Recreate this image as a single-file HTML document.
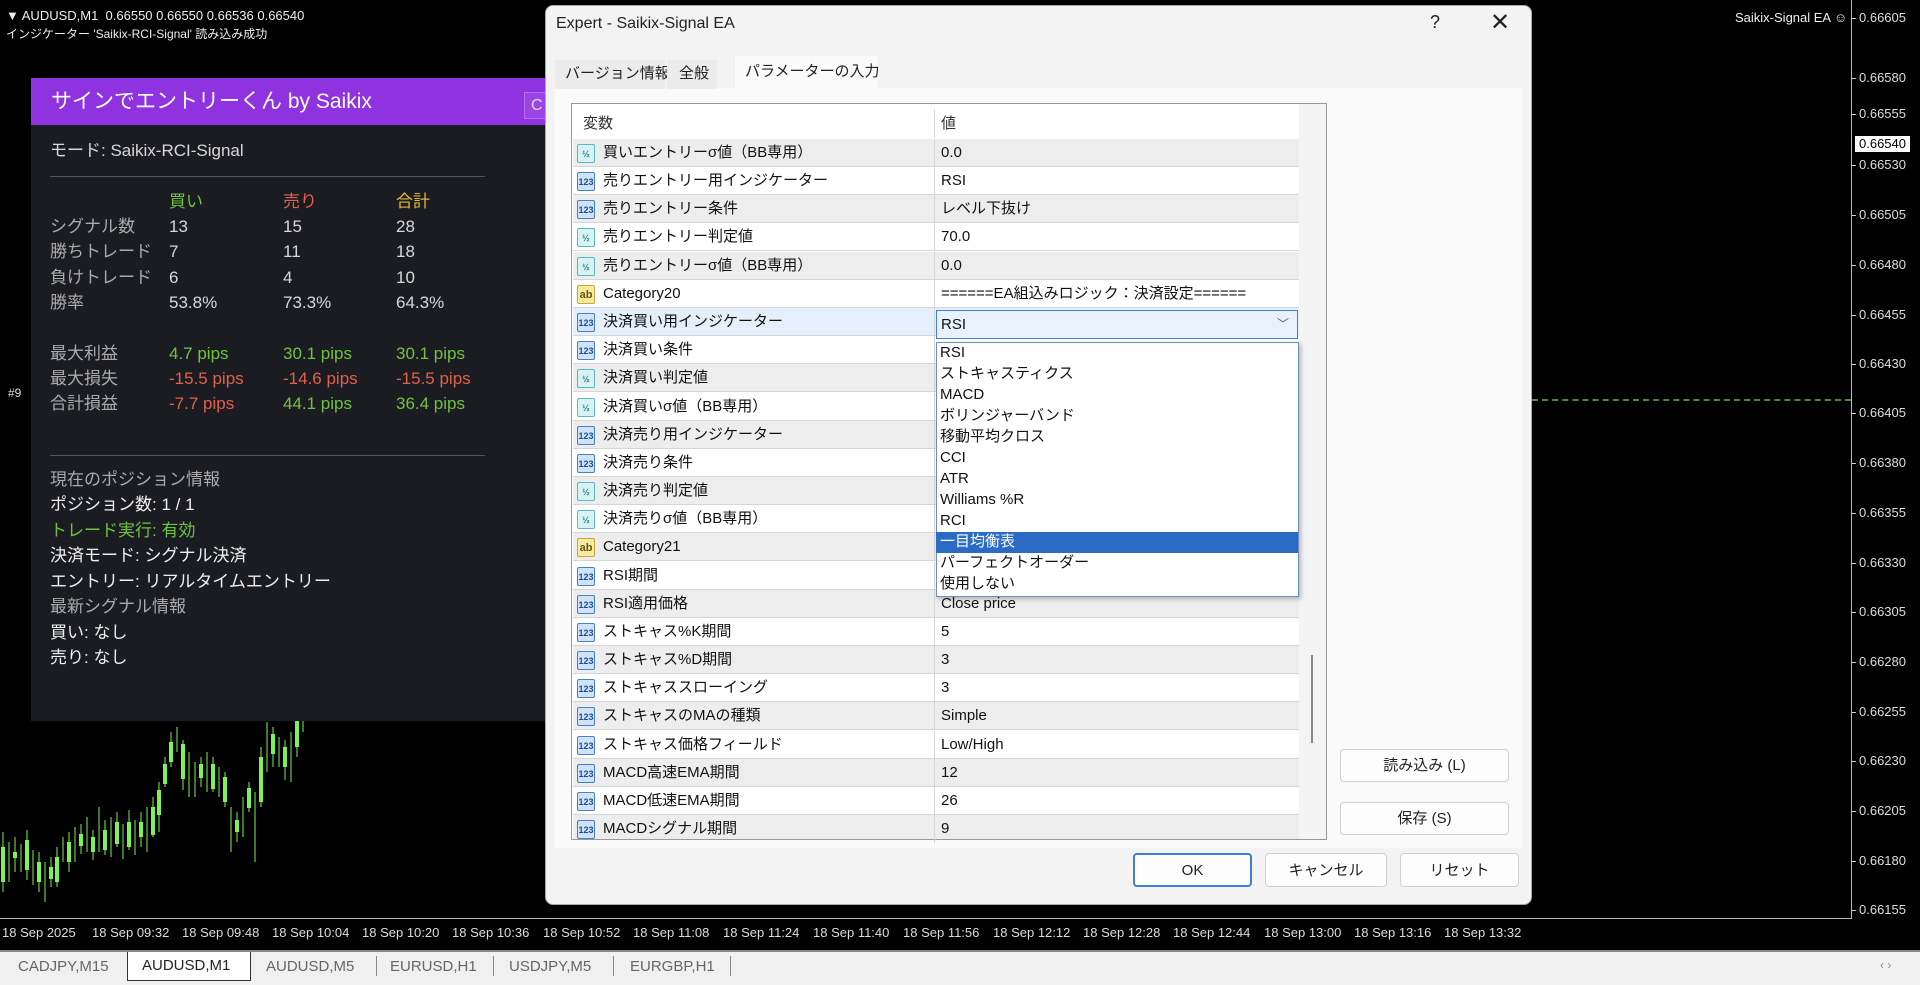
<!DOCTYPE html>
<html><head><meta charset="utf-8"><style>
*{margin:0;padding:0;box-sizing:border-box}
body{width:1920px;height:985px;background:#000;position:relative;overflow:hidden;font-family:"Liberation Sans","Noto Sans CJK JP",sans-serif;line-height:1.2}
.a{position:absolute;white-space:nowrap}
.pl{position:absolute;left:1859px;color:#ddd;font-size:13px}
.pl:before{content:"";position:absolute;left:-7px;top:8px;width:4px;height:1px;background:#ccc}
.tl{position:absolute;top:925px;color:#ddd;font-size:13px}
.pt{position:absolute;font-size:17px;color:#d8d8d8;line-height:20px;height:20px;white-space:nowrap}
.row{position:absolute;left:573px;width:726px;height:28px;border-bottom:1px solid #d6d6d6;font-size:15px;color:#111}
.row .n{position:absolute;left:30px;top:5px;line-height:18px;height:18px}
.row .v{position:absolute;left:368px;top:5px;line-height:18px;height:18px}
.row .sep{position:absolute;left:361px;top:0;width:1px;height:28px;background:#d6d6d6}
.ic{position:absolute;left:4px;top:5px;width:18px;height:19px;border-radius:2px;font-size:9px;font-weight:bold;text-align:center;line-height:18px}
.i1{background:#cfe2f7;border:1px solid #4a7fc0;color:#1b4f96}
.i2{background:#d8f3f3;border:1px solid #5bb7c0;color:#2a7f8a}
.i3{background:#f6eca0;border:1px solid #c7a93a;color:#6a5510;font-size:11px}
.g{background:#ededed}.w{background:#fff}
.dd{position:absolute;left:936px;width:362px;font-size:15px;color:#111;padding-left:4px;line-height:20px;height:21px}
.btn{position:absolute;background:#fdfdfd;border:1px solid #d0d0d0;border-radius:4px;font-size:15px;color:#222;text-align:center;line-height:18px}
</style></head><body>

<div class="a" style="left:6px;top:8px;color:#eee;font-size:13px">▼ AUDUSD,M1&nbsp; 0.66550 0.66550 0.66536 0.66540</div>
<div class="a" style="left:6px;top:27px;color:#eee;font-size:12px">インジケーター 'Saikix-RCI-Signal' 読み込み成功</div>
<div class="a" style="left:1735px;top:10px;color:#eee;font-size:13px">Saikix-Signal EA ☺</div>
<div class="a" style="left:1851px;top:0;width:1px;height:918px;background:#bbb"></div>
<div class="a" style="left:0;top:918px;width:1852px;height:1px;background:#bbb"></div>
<div class="a" style="left:1532px;top:399px;width:319px;border-top:2px dashed #4f8a34"></div>
<div class="a" style="left:8px;top:386px;color:#ddd;font-size:12px">#9</div>

<div class="pl" style="top:10px">0.66605</div>
<div class="pl" style="top:70px">0.66580</div>
<div class="pl" style="top:106px">0.66555</div>
<div class="a" style="left:1855px;top:136px;background:#fff;color:#000;font-size:13px;padding:0 4px">0.66540</div>
<div class="pl" style="top:157px">0.66530</div>
<div class="pl" style="top:207px">0.66505</div>
<div class="pl" style="top:257px">0.66480</div>
<div class="pl" style="top:307px">0.66455</div>
<div class="pl" style="top:356px">0.66430</div>
<div class="pl" style="top:405px">0.66405</div>
<div class="pl" style="top:455px">0.66380</div>
<div class="pl" style="top:505px">0.66355</div>
<div class="pl" style="top:555px">0.66330</div>
<div class="pl" style="top:604px">0.66305</div>
<div class="pl" style="top:654px">0.66280</div>
<div class="pl" style="top:704px">0.66255</div>
<div class="pl" style="top:753px">0.66230</div>
<div class="pl" style="top:803px">0.66205</div>
<div class="pl" style="top:853px">0.66180</div>
<div class="pl" style="top:902px">0.66155</div>

<div class="tl" style="left:2px">18 Sep 2025</div>
<div class="tl" style="left:92px">18 Sep 09:32</div>
<div class="tl" style="left:182px">18 Sep 09:48</div>
<div class="tl" style="left:272px">18 Sep 10:04</div>
<div class="tl" style="left:362px">18 Sep 10:20</div>
<div class="tl" style="left:452px">18 Sep 10:36</div>
<div class="tl" style="left:543px">18 Sep 10:52</div>
<div class="tl" style="left:633px">18 Sep 11:08</div>
<div class="tl" style="left:723px">18 Sep 11:24</div>
<div class="tl" style="left:813px">18 Sep 11:40</div>
<div class="tl" style="left:903px">18 Sep 11:56</div>
<div class="tl" style="left:993px">18 Sep 12:12</div>
<div class="tl" style="left:1083px">18 Sep 12:28</div>
<div class="tl" style="left:1173px">18 Sep 12:44</div>
<div class="tl" style="left:1264px">18 Sep 13:00</div>
<div class="tl" style="left:1354px">18 Sep 13:16</div>
<div class="tl" style="left:1444px">18 Sep 13:32</div>

<svg class="a" style="left:0;top:712px" width="340" height="206">
<g stroke="#7ef05a" fill="none" stroke-width="1">
<path d="M3 120v60M9 130v40M15 125v35M21 132v28M27 118v50M33 138v35M39 140v40M45 150v40M51 145v30M57 135v40M63 125v25M69 120v40M75 115v35M81 112v30M87 105v35M93 118v30M99 95v45M105 108v35M111 105v40M117 100v35M123 112v35M129 98v40M135 108v35M141 100v35M147 95v45M153 85v40M159 70v50M165 45v30M171 20v35M177 15v25M183 28v50M189 40v45M195 50v35M201 45v30M207 40v40M213 45v35M219 55v30M225 60v35M231 95v45M237 100v30M243 85v40M249 70v30M255 80v70M261 35v60M267 10v50M273 15v40M279 25v30M285 28v40M291 20v50M297 0v45M303 0v20"/>
</g>
<g fill="#7ef05a">
<rect x="1" y="135" width="4" height="35"/><rect x="13" y="140" width="4" height="6"/><rect x="25" y="128" width="4" height="30"/><rect x="37" y="150" width="4" height="20"/><rect x="49" y="155" width="4" height="12"/><rect x="55" y="145" width="4" height="25"/><rect x="67" y="130" width="4" height="20"/><rect x="79" y="122" width="4" height="12"/><rect x="91" y="125" width="4" height="15"/><rect x="103" y="118" width="4" height="20"/><rect x="115" y="110" width="4" height="22"/><rect x="127" y="110" width="4" height="25"/><rect x="139" y="110" width="4" height="15"/><rect x="151" y="95" width="4" height="28"/><rect x="157" y="78" width="4" height="25"/><rect x="163" y="52" width="4" height="20"/><rect x="169" y="30" width="4" height="20"/><rect x="181" y="32" width="4" height="35"/><rect x="199" y="52" width="4" height="14"/><rect x="211" y="52" width="4" height="25"/><rect x="223" y="65" width="4" height="25"/><rect x="235" y="108" width="4" height="12"/><rect x="247" y="76" width="4" height="20"/><rect x="259" y="45" width="4" height="45"/><rect x="271" y="22" width="4" height="20"/><rect x="283" y="35" width="4" height="20"/><rect x="295" y="5" width="4" height="30"/>
</g></svg>

<div class="a" style="left:31px;top:78px;width:520px;height:643px;background:#1b1c22"></div>
<div class="a" style="left:31px;top:78px;width:520px;height:47px;background:#8f33e0"></div>
<div class="a" style="left:51px;top:89px;color:#fff;font-size:21px;line-height:25px">サインでエントリーくん by Saikix</div>
<div class="a" style="left:524px;top:92px;width:30px;height:27px;border:1px solid #b070f0;background:#9a44e8;color:#ddd;font-size:16px;padding:3px 0 0 6px">C</div>
<div class="pt" style="left:50px;top:141px">モード: Saikix-RCI-Signal</div>
<div class="a" style="left:50px;top:176px;width:435px;height:1px;background:#555"></div>
<div class="pt" style="left:169px;top:192px;color:#6fc240">買い</div>
<div class="pt" style="left:283px;top:192px;color:#e0604a">売り</div>
<div class="pt" style="left:396px;top:192px;color:#e6b92e">合計</div>
<div class="pt" style="left:50px;top:217px;color:#aaa">シグナル数</div><div class="pt" style="left:169px;top:217px">13</div><div class="pt" style="left:283px;top:217px">15</div><div class="pt" style="left:396px;top:217px">28</div>
<div class="pt" style="left:50px;top:242px;color:#aaa">勝ちトレード</div><div class="pt" style="left:169px;top:242px">7</div><div class="pt" style="left:283px;top:242px">11</div><div class="pt" style="left:396px;top:242px">18</div>
<div class="pt" style="left:50px;top:268px;color:#aaa">負けトレード</div><div class="pt" style="left:169px;top:268px">6</div><div class="pt" style="left:283px;top:268px">4</div><div class="pt" style="left:396px;top:268px">10</div>
<div class="pt" style="left:50px;top:293px;color:#aaa">勝率</div><div class="pt" style="left:169px;top:293px">53.8%</div><div class="pt" style="left:283px;top:293px">73.3%</div><div class="pt" style="left:396px;top:293px">64.3%</div>
<div class="pt" style="left:50px;top:344px;color:#aaa">最大利益</div><div class="pt" style="left:169px;top:344px;color:#6fc240">4.7 pips</div><div class="pt" style="left:283px;top:344px;color:#6fc240">30.1 pips</div><div class="pt" style="left:396px;top:344px;color:#6fc240">30.1 pips</div>
<div class="pt" style="left:50px;top:369px;color:#aaa">最大損失</div><div class="pt" style="left:169px;top:369px;color:#e0604a">-15.5 pips</div><div class="pt" style="left:283px;top:369px;color:#e0604a">-14.6 pips</div><div class="pt" style="left:396px;top:369px;color:#e0604a">-15.5 pips</div>
<div class="pt" style="left:50px;top:394px;color:#aaa">合計損益</div><div class="pt" style="left:169px;top:394px;color:#e0604a">-7.7 pips</div><div class="pt" style="left:283px;top:394px;color:#6fc240">44.1 pips</div><div class="pt" style="left:396px;top:394px;color:#6fc240">36.4 pips</div>
<div class="a" style="left:50px;top:455px;width:435px;height:1px;background:#555"></div>
<div class="pt" style="left:50px;top:470px;color:#aaa">現在のポジション情報</div>
<div class="pt" style="left:50px;top:495px;color:#eee">ポジション数: 1 / 1</div>
<div class="pt" style="left:50px;top:521px;color:#6fc240">トレード実行: 有効</div>
<div class="pt" style="left:50px;top:546px;color:#eee">決済モード: シグナル決済</div>
<div class="pt" style="left:50px;top:572px;color:#eee">エントリー: リアルタイムエントリー</div>
<div class="pt" style="left:50px;top:597px;color:#aaa">最新シグナル情報</div>
<div class="pt" style="left:50px;top:623px;color:#eee">買い: なし</div>
<div class="pt" style="left:50px;top:648px;color:#eee">売り: なし</div>

<div class="a" style="left:545px;top:5px;width:987px;height:900px;background:#f3f3f3;border:1px solid #aaa;border-radius:8px"></div>
<div class="a" style="left:556px;top:14px;font-size:16px;color:#222;line-height:20px">Expert - Saikix-Signal EA</div>
<div class="a" style="left:1430px;top:12px;font-size:18px;color:#222">?</div>
<div class="a" style="left:1490px;top:9px;font-size:24px;color:#222">✕</div>
<div class="a" style="left:555px;top:88px;width:967px;height:760px;background:#fafafa"></div>
<div class="a" style="left:555px;top:60px;width:110px;height:29px;background:#ececec;font-size:15px;color:#222;padding:5px 0 0 10px;line-height:18px">バージョン情報</div>
<div class="a" style="left:667px;top:60px;width:50px;height:29px;background:#ececec;font-size:15px;color:#222;padding:5px 0 0 12px;line-height:18px">全般</div>
<div class="a" style="left:735px;top:56px;width:142px;height:34px;background:#fafafa;font-size:15px;color:#222;padding:7px 0 0 10px;line-height:18px">パラメーターの入力</div>

<div class="a" style="left:571px;top:103px;width:756px;height:737px;background:#fff;border:1px solid #999"></div>
<div class="a" style="left:1299px;top:104px;width:27px;height:735px;background:#f4f4f4"></div>
<div class="a" style="left:1311px;top:655px;width:2px;height:88px;background:#888"></div>
<div class="row w" style="top:110px;height:29px;border:none"><span class="n" style="left:10px;color:#333">変数</span><span class="v" style="color:#333">値</span><span class="sep"></span></div>

<div class="row g" style="top:139px"><span class="ic i2">½</span><span class="n">買いエントリーσ値（BB専用）</span><span class="sep"></span><span class="v">0.0</span></div>
<div class="row w" style="top:167px"><span class="ic i1">123</span><span class="n">売りエントリー用インジケーター</span><span class="sep"></span><span class="v">RSI</span></div>
<div class="row g" style="top:195px"><span class="ic i1">123</span><span class="n">売りエントリー条件</span><span class="sep"></span><span class="v">レベル下抜け</span></div>
<div class="row w" style="top:223px"><span class="ic i2">½</span><span class="n">売りエントリー判定値</span><span class="sep"></span><span class="v">70.0</span></div>
<div class="row g" style="top:252px"><span class="ic i2">½</span><span class="n">売りエントリーσ値（BB専用）</span><span class="sep"></span><span class="v">0.0</span></div>
<div class="row w" style="top:280px"><span class="ic i3">ab</span><span class="n">Category20</span><span class="sep"></span><span class="v">======EA組込みロジック：決済設定======</span></div>
<div class="row" style="top:308px;background:#e4effb"><span class="ic i1">123</span><span class="n">決済買い用インジケーター</span><span class="sep"></span></div>
<div class="row w" style="top:336px"><span class="ic i1">123</span><span class="n">決済買い条件</span><span class="sep"></span></div>
<div class="row g" style="top:364px"><span class="ic i2">½</span><span class="n">決済買い判定値</span><span class="sep"></span></div>
<div class="row w" style="top:393px"><span class="ic i2">½</span><span class="n">決済買いσ値（BB専用）</span><span class="sep"></span></div>
<div class="row g" style="top:421px"><span class="ic i1">123</span><span class="n">決済売り用インジケーター</span><span class="sep"></span></div>
<div class="row w" style="top:449px"><span class="ic i1">123</span><span class="n">決済売り条件</span><span class="sep"></span></div>
<div class="row g" style="top:477px"><span class="ic i2">½</span><span class="n">決済売り判定値</span><span class="sep"></span></div>
<div class="row w" style="top:505px"><span class="ic i2">½</span><span class="n">決済売りσ値（BB専用）</span><span class="sep"></span></div>
<div class="row g" style="top:533px"><span class="ic i3">ab</span><span class="n">Category21</span><span class="sep"></span></div>
<div class="row w" style="top:562px"><span class="ic i1">123</span><span class="n">RSI期間</span><span class="sep"></span></div>
<div class="row g" style="top:590px"><span class="ic i1">123</span><span class="n">RSI適用価格</span><span class="sep"></span><span class="v">Close price</span></div>
<div class="row w" style="top:618px"><span class="ic i1">123</span><span class="n">ストキャス%K期間</span><span class="sep"></span><span class="v">5</span></div>
<div class="row g" style="top:646px"><span class="ic i1">123</span><span class="n">ストキャス%D期間</span><span class="sep"></span><span class="v">3</span></div>
<div class="row w" style="top:674px"><span class="ic i1">123</span><span class="n">ストキャススローイング</span><span class="sep"></span><span class="v">3</span></div>
<div class="row g" style="top:702px"><span class="ic i1">123</span><span class="n">ストキャスのMAの種類</span><span class="sep"></span><span class="v">Simple</span></div>
<div class="row w" style="top:731px"><span class="ic i1">123</span><span class="n">ストキャス価格フィールド</span><span class="sep"></span><span class="v">Low/High</span></div>
<div class="row g" style="top:759px"><span class="ic i1">123</span><span class="n">MACD高速EMA期間</span><span class="sep"></span><span class="v">12</span></div>
<div class="row w" style="top:787px"><span class="ic i1">123</span><span class="n">MACD低速EMA期間</span><span class="sep"></span><span class="v">26</span></div>
<div class="row g" style="top:815px;height:24px;border:none"><span class="ic i1">123</span><span class="n">MACDシグナル期間</span><span class="sep"></span><span class="v">9</span></div>

<div class="a" style="left:936px;top:310px;width:362px;height:29px;background:#e9f2fc;border:1px solid #3d7fd0;font-size:15px;color:#111;padding:5px 0 0 4px;line-height:18px">RSI<span style="position:absolute;right:8px;top:4px;color:#555;font-size:12px">﹀</span></div>
<div class="a" style="left:936px;top:342px;width:363px;height:255px;background:#fff;border:1px solid #6a8fc0;box-shadow:2px 2px 4px rgba(0,0,0,.25)"></div>
<div class="dd" style="top:343px">RSI</div>
<div class="dd" style="top:364px">ストキャスティクス</div>
<div class="dd" style="top:385px">MACD</div>
<div class="dd" style="top:406px">ボリンジャーバンド</div>
<div class="dd" style="top:427px">移動平均クロス</div>
<div class="dd" style="top:448px">CCI</div>
<div class="dd" style="top:469px">ATR</div>
<div class="dd" style="top:490px">Williams %R</div>
<div class="dd" style="top:511px">RCI</div>
<div class="dd" style="top:532px;background:#2b6bc4;color:#fff">一目均衡表</div>
<div class="dd" style="top:553px">パーフェクトオーダー</div>
<div class="dd" style="top:574px">使用しない</div>

<div class="btn" style="left:1340px;top:749px;width:169px;height:33px;padding-top:7px">読み込み (L)</div>
<div class="btn" style="left:1340px;top:802px;width:169px;height:33px;padding-top:7px">保存 (S)</div>
<div class="btn" style="left:1133px;top:853px;width:119px;height:34px;padding-top:7px;border:2px solid #3d7fd0">OK</div>
<div class="btn" style="left:1265px;top:853px;width:122px;height:34px;padding-top:8px">キャンセル</div>
<div class="btn" style="left:1400px;top:853px;width:119px;height:34px;padding-top:8px">リセット</div>

<div class="a" style="left:0;top:950px;width:1920px;height:35px;background:#f0f0f0;border-top:2px solid #888"></div>
<div class="a" style="left:18px;top:958px;font-size:15px;color:#666">CADJPY,M15</div>
<div class="a" style="left:127px;top:952px;width:124px;height:29px;background:#fff;border:1px solid #333;border-top:none;font-size:15px;color:#222;padding:5px 0 0 14px">AUDUSD,M1</div>
<div class="a" style="left:266px;top:958px;font-size:15px;color:#666">AUDUSD,M5</div>
<div class="a" style="left:376px;top:956px;width:1px;height:20px;background:#888"></div>
<div class="a" style="left:390px;top:958px;font-size:15px;color:#666">EURUSD,H1</div>
<div class="a" style="left:493px;top:956px;width:1px;height:20px;background:#888"></div>
<div class="a" style="left:509px;top:958px;font-size:15px;color:#666">USDJPY,M5</div>
<div class="a" style="left:613px;top:956px;width:1px;height:20px;background:#888"></div>
<div class="a" style="left:630px;top:958px;font-size:15px;color:#666">EURGBP,H1</div>
<div class="a" style="left:730px;top:956px;width:1px;height:20px;background:#888"></div>
<div class="a" style="left:1880px;top:958px;font-size:12px;color:#888">‹ ›</div>
</body></html>
